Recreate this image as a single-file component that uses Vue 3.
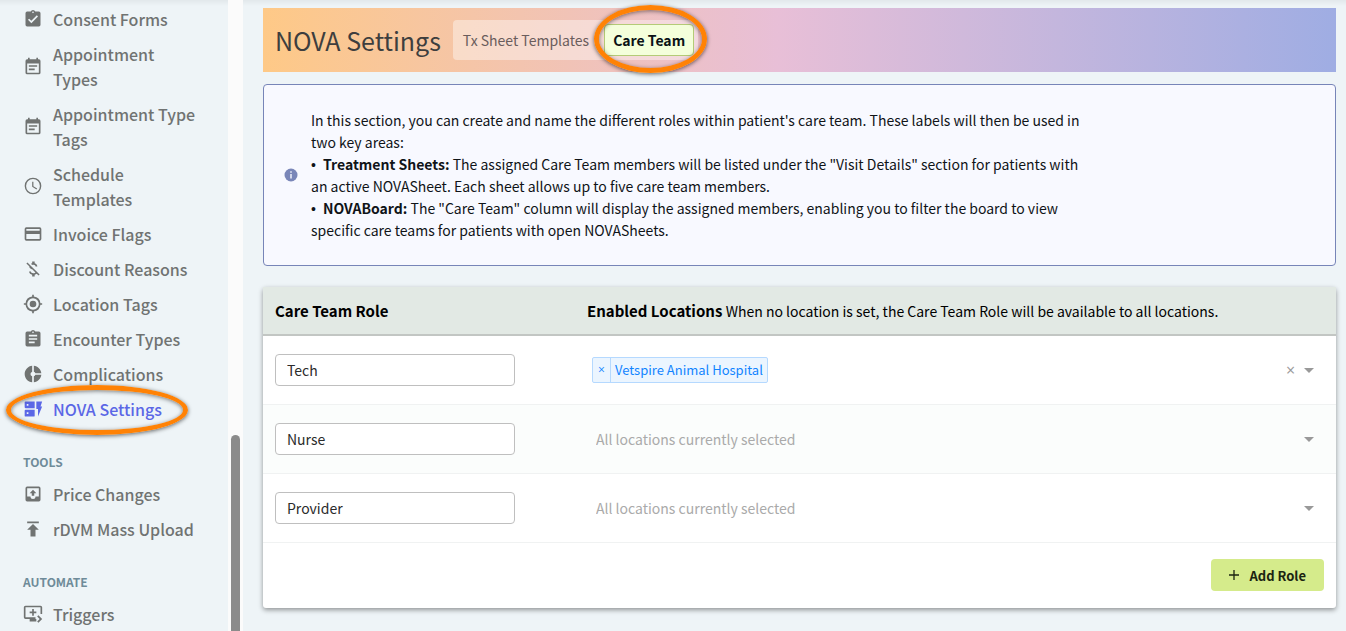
<script setup>
import { ref } from 'vue'

const icons = {
  clipboardCheck: 'M19 3h-4.2a3 3 0 0 0-5.6 0H5a2 2 0 0 0-2 2v14a2 2 0 0 0 2 2h14a2 2 0 0 0 2-2V5a2 2 0 0 0-2-2zm-7 0a1 1 0 1 1 0 2 1 1 0 0 1 0-2zm-2 14-4-4 1.4-1.4 2.6 2.6 6.6-6.6L18 9z',
  event: 'M19 4h-1V2h-2v2H8V2H6v2H5a2 2 0 0 0-2 2v14a2 2 0 0 0 2 2h14a2 2 0 0 0 2-2V6a2 2 0 0 0-2-2zm0 16H5V9h14zM7 11h10v2H7zm0 4h7v2H7z',
  clock: 'M12 2a10 10 0 1 0 0 20 10 10 0 0 0 0-20zm0 18.300a8.300 8.300 0 1 1 0-16.600 8.300 8.300 0 0 1 0 16.600zM12.500 7H11v6l5.200 3.200.8-1.300-4.500-2.700z',
  card: 'M20 4H4a2 2 0 0 0-2 2v12a2 2 0 0 0 2 2h16a2 2 0 0 0 2-2V6a2 2 0 0 0-2-2zm0 14H4v-6h16zm0-10H4V6h16z',
  moneyOff: 'M12.500 6.900c1.780 0 2.440.85 2.500 2.100h2.210c-.07-1.720-1.120-3.300-3.210-3.810V3h-3v2.160c-.53.12-1.030.3-1.480.54l1.470 1.470c.41-.17.91-.27 1.510-.27zM5.330 4.060 4.060 5.330 7.500 8.770c0 2.080 1.560 3.210 3.910 3.910l3.510 3.510c-.34.48-1.050.91-2.420.91-2.060 0-2.870-.92-2.980-2.100h-2.200c.12 2.190 1.760 3.420 3.680 3.830V21h3v-2.150c.96-.18 1.820-.55 2.450-1.120l2.220 2.220 1.270-1.270z',
  target: 'M12 8a4 4 0 1 0 0 8 4 4 0 0 0 0-8zm8.940 3A9 9 0 0 0 13 3.060V1h-2v2.060A9 9 0 0 0 3.060 11H1v2h2.060A9 9 0 0 0 11 20.940V23h2v-2.060A9 9 0 0 0 20.940 13H23v-2zM12 19a7 7 0 1 1 0-14 7 7 0 0 1 0 14z',
  clipboard: 'M19 3h-4.200a3 3 0 0 0-5.600 0H5a2 2 0 0 0-2 2v14a2 2 0 0 0 2 2h14a2 2 0 0 0 2-2V5a2 2 0 0 0-2-2zm-7 0a1 1 0 1 1 0 2 1 1 0 0 1 0-2zm2 14H7v-2h7zm3-4H7v-2h10zm0-4H7V7h10z',
  donut: 'M11 9.160V2C6 2.500 2 6.800 2 12s4 9.500 9 10v-7.160A3 3 0 0 1 11 9.160zM14.860 11H22c-.5-4.750-4.250-8.500-9-9v7.160c.9.320 1.540 1 1.860 1.840zM13 14.840V22c4.750-.5 8.500-4.250 9-9h-7.140c-.32.84-.96 1.520-1.860 1.840z',
  dynamic: 'M14 20a1 1 0 0 1-1 1H3a1 1 0 0 1-1-1v-6a1 1 0 0 1 1-1h11zM4.500 16v2h2v-2zM14 11H3a1 1 0 0 1-1-1V4a1 1 0 0 1 1-1h11zM4.500 6v2h2V6zM23 9h-2l2-6h-7v9h2v9z',
  price: 'M19 3H5a2 2 0 0 0-2 2v14a2 2 0 0 0 2 2h14a2 2 0 0 0 2-2V5a2 2 0 0 0-2-2zm0 12h-4a3 3 0 0 1-6 0H5V5h14zM8 11h2.500v3h3v-3H16l-4-4z',
  upload: 'M5 3v2h14V3zm0 10h4v8h6v-8h4l-7-7z',
  triggers: 'M21 2H3a2 2 0 0 0-2 2v12a2 2 0 0 0 2 2h5v3h8v-3h-1v-2H3V4h18v8h2V4a2 2 0 0 0-2-2zM11 6v3H8v2h3v3h2v-3h3V9h-3V6zM18.500 13.500 17 15l3 3-3 3 1.500 1.500L23 18z'
}

const groups = [
  {
    title: '',
    items: [
      { label: 'Consent Forms', icon: 'clipboardCheck' },
      { label: 'Appointment Types', icon: 'event' },
      { label: 'Appointment Type Tags', icon: 'event' },
      { label: 'Schedule Templates', icon: 'clock' },
      { label: 'Invoice Flags', icon: 'card' },
      { label: 'Discount Reasons', icon: 'moneyOff' },
      { label: 'Location Tags', icon: 'target' },
      { label: 'Encounter Types', icon: 'clipboard' },
      { label: 'Complications', icon: 'donut' },
      { label: 'NOVA Settings', icon: 'dynamic', active: true }
    ]
  },
  {
    title: 'TOOLS',
    items: [
      { label: 'Price Changes', icon: 'price' },
      { label: 'rDVM Mass Upload', icon: 'upload' }
    ]
  },
  { title: 'AUTOMATE', items: [{ label: 'Triggers', icon: 'triggers' }] }
]

const roles = ref([
  { name: 'Tech', locations: ['Vetspire Animal Hospital'] },
  { name: 'Nurse', locations: [] },
  { name: 'Provider', locations: [] }
])

const addRole = () => roles.value.push({ name: '', locations: [] })
</script>

<template>
  <div class="app">
    <aside class="sidebar">
      <nav class="nav" aria-label="Settings">
        <section v-for="group in groups" :key="group.title" class="group">
          <h2 v-if="group.title" class="group-title">{{ group.title }}</h2>
          <a
            v-for="item in group.items"
            :key="item.label"
            href="#"
            class="nav-item"
            :class="{ active: item.active }"
          >
            <svg class="nav-icon" viewBox="0 0 24 24" aria-hidden="true">
              <path :d="icons[item.icon]" fill-rule="evenodd" />
            </svg>
            <span>{{ item.label }}</span>
            <span v-if="item.active" class="ring nav-ring"></span>
          </a>
        </section>
      </nav>
      <div class="track"><div class="thumb"></div></div>
    </aside>

    <main class="main">
      <header class="banner">
        <h1 class="title">NOVA Settings</h1>
        <div class="tabs">
          <button type="button" class="tab">Tx Sheet Templates</button>
          <button type="button" class="tab selected">
            Care Team
            <span class="ring tab-ring"></span>
          </button>
        </div>
      </header>

      <section class="info">
        <svg class="info-icon" viewBox="0 0 14 14" aria-hidden="true">
          <circle cx="7" cy="7" r="6.500" fill="#7986b8" />
          <path d="M6.300 3.300h1.400v1.400H6.300zM6.300 6h1.400v4.500H6.300z" fill="#f8f9ff" />
        </svg>
        <div class="info-text">
          <p>In this section, you can create and name the different roles within patient's care team. These labels will then be used in two key areas:</p>
          <p><span class="bullet">•</span><strong>Treatment Sheets:</strong> The assigned Care Team members will be listed under the "Visit Details" section for patients with an active NOVASheet. Each sheet allows up to five care team members.</p>
          <p><span class="bullet">•</span><strong>NOVABoard:</strong> The "Care Team" column will display the assigned members, enabling you to filter the board to view specific care teams for patients with open NOVASheets.</p>
        </div>
      </section>

      <section class="card">
        <table class="roles">
          <thead>
            <tr>
              <th class="role-col" scope="col">Care Team Role</th>
              <th scope="col">
                Enabled Locations
                <span class="hint">When no location is set, the Care Team Role will be available to all locations.</span>
              </th>
            </tr>
          </thead>
          <tbody>
            <tr v-for="(role, i) in roles" :key="i">
              <td><input v-model="role.name" class="role-input" type="text" aria-label="Care Team Role" /></td>
              <td>
                <div class="picker">
                  <span v-for="location in role.locations" :key="location" class="tag">
                    <button type="button" class="tag-x" :aria-label="'Remove ' + location">×</button>
                    <span class="tag-label">{{ location }}</span>
                  </span>
                  <input
                    class="picker-input"
                    type="text"
                    role="combobox"
                    aria-label="Enabled Locations"
                    :placeholder="role.locations.length ? '' : 'All locations currently selected'"
                  />
                  <button v-if="role.locations.length" type="button" class="clear" aria-label="Clear" @click="role.locations = []">×</button>
                  <button type="button" class="open" aria-label="Open">
                    <svg class="caret" viewBox="0 0 10 5" aria-hidden="true"><path d="M0 0h10L5 5z" fill="#999" /></svg>
                  </button>
                </div>
              </td>
            </tr>
          </tbody>
        </table>
        <footer class="card-foot">
          <button type="button" class="add" @click="addRole">
            <svg class="plus" viewBox="0 0 10 10" aria-hidden="true"><path d="M5 0v10M0 5h10" stroke="#1b2411" stroke-width="1.300" /></svg>
            Add Role
          </button>
        </footer>
      </section>
    </main>
  </div>
</template>

<style>
body {
  background: #eef4f7;
}
</style>

<style scoped>
.app,
.app * {
  box-sizing: border-box;
}
.app {
  display: flex;
  height: 100vh;
  overflow: hidden;
  background: linear-gradient(#e2e8eb, #eef4f7 6px);
  font-family: "Noto Sans CJK SC", "Noto Sans", sans-serif;
  font-size: 14px;
  color: #101418;
}
.app button,
.app input {
  font-family: inherit;
  margin: 0;
}
.sidebar {
  display: flex;
  flex: none;
  width: 243px;
}
.nav {
  flex: 1;
  padding-top: 2px;
}
.group {
  margin-bottom: 19px;
}
.group-title {
  margin: 0;
  padding-left: 23px;
  font-size: 12px;
  line-height: 31px;
  font-weight: 700;
  color: #6f8b99;
}
.nav-item {
  position: relative;
  display: flex;
  align-items: center;
  gap: 10px;
  padding: 5px 27px 5px 23px;
  font-size: 16px;
  line-height: 25px;
  font-weight: 500;
  color: #707372;
  text-decoration: none;
}
.nav-item.active {
  color: #5b67e6;
}
.nav-icon {
  flex: none;
  width: 20px;
  height: 20px;
  margin-bottom: 2px;
  fill: currentColor;
}
.ring {
  position: absolute;
  border: 5px solid #ff8205;
  border-radius: 50%;
  box-shadow: 0 1px 4px rgba(0, 0, 0, 0.6), inset 0 1px 4px rgba(0, 0, 0, 0.5);
  pointer-events: none;
}
.nav-ring {
  inset: -7px 40px -8px 6px;
}
.track {
  display: flex;
  flex-direction: column;
  justify-content: flex-end;
  align-items: center;
  width: 15px;
  background: #fbfbfb;
}
.thumb {
  width: 9px;
  height: 31%;
  border-radius: 5px 5px 0 0;
  background: #8b8b8b;
}
.main {
  flex: 1;
  min-width: 0;
  padding: 8px 10px 0 20px;
}
.banner {
  display: flex;
  align-items: center;
  gap: 12px;
  height: 64px;
  padding: 0 12px;
  background: linear-gradient(90deg, #fec987, #e8bfd7 48%, #9fade3);
}
.title {
  margin: 0;
  font-size: 25px;
  line-height: 40px;
  font-weight: 400;
  color: #3e3e3e;
}
.tabs {
  display: flex;
  align-items: center;
  height: 40px;
  padding: 0 4px 0 0;
  border-radius: 4px;
  background: rgba(255, 255, 255, 0.4);
}
.tab {
  position: relative;
  height: 32px;
  padding: 0 15px 0 10px;
  border: 0;
  background: none;
  font-size: 14px;
  line-height: 20px;
  color: #6a5d5c;
}
.tab.selected {
  padding: 0 8px;
  border: 1px solid #b4cb77;
  border-radius: 4px;
  background: #f4ffdb;
  font-weight: 700;
  color: #0b1216;
}
.tab-ring {
  inset: -20px -14px -18px -11px;
}
.info {
  display: flex;
  align-items: center;
  gap: 13px;
  margin-top: 12px;
  padding: 24px 20px;
  border: 1px solid #7785b8;
  border-radius: 4px;
  background: #f8f9ff;
}
.info-icon {
  flex: none;
  width: 14px;
  height: 14px;
}
.info-text {
  max-width: 780px;
  font-size: 14px;
  line-height: 22px;
}
.info-text p {
  margin: 0;
}
.bullet {
  display: inline-block;
  width: 12px;
  font-family: "Liberation Sans", sans-serif;
  line-height: 20px;
}
.card {
  margin-top: 21px;
  border-radius: 3px;
  background: #fff;
  box-shadow: 0 2px 5px rgba(0, 0, 0, 0.4);
}
.roles {
  width: 100%;
  border-collapse: separate;
  border-spacing: 0;
}
.roles th {
  height: 49px;
  padding: 0 12px;
  border-bottom: 2px solid #c2c6c3;
  background: #e2e9e4;
  font-size: 15px;
  line-height: 22px;
  font-weight: 700;
  text-align: left;
  color: #000;
}
.roles .role-col {
  width: 312px;
}
.hint {
  font-size: 14px;
  font-weight: 400;
}
.roles td {
  height: 69px;
  padding: 0 12px;
  border-bottom: 1px solid #f0f2f2;
}
.roles tbody tr:nth-child(even) td {
  background: #fbfdfc;
}
.role-input {
  display: block;
  width: 240px;
  height: 32px;
  padding: 0 11px;
  border: 1px solid #bfbfbf;
  border-radius: 4px;
  background: #fff;
  font-size: 14px;
  color: #2b2b2b;
}
.picker {
  display: flex;
  align-items: center;
  padding: 0 5px;
}
.tag {
  display: flex;
  height: 26px;
  border: 1px solid #b5d9ff;
  border-radius: 2px;
  background: #ebf5ff;
  font-size: 13px;
  line-height: 24px;
  color: #1184ff;
}
.app .tag-x {
  width: 18px;
  padding: 0;
  border: 0;
  border-right: 1px solid #b5d9ff;
  background: none;
  font-family: "Open Sans", sans-serif;
  font-size: 12px;
  line-height: 22px;
  color: inherit;
}
.tag-label {
  padding: 0 4px;
}
.picker-input {
  flex: 1;
  min-width: 0;
  height: 32px;
  padding: 0 4px;
  border: 0;
  outline: 0;
  background: none;
  font-size: 14px;
}
.picker-input::placeholder {
  color: #aaa;
}
.clear,
.open {
  display: flex;
  align-items: center;
  justify-content: center;
  height: 24px;
  padding: 0;
  border: 0;
  background: none;
  color: #999;
}
.app .clear {
  width: 17px;
  font-family: "Open Sans", sans-serif;
  font-size: 16px;
}
.open {
  width: 20px;
}
.caret {
  width: 10px;
  height: 5px;
}
.card-foot {
  display: flex;
  justify-content: flex-end;
  padding: 16px 12px 17px;
}
.add {
  display: flex;
  align-items: center;
  gap: 10px;
  height: 32px;
  padding: 0 18px;
  border: 0;
  border-radius: 4px;
  background: #d5eb8b;
  font-size: 13px;
  font-weight: 700;
  color: #1b2411;
}
.plus {
  width: 10px;
  height: 10px;
}
</style>
